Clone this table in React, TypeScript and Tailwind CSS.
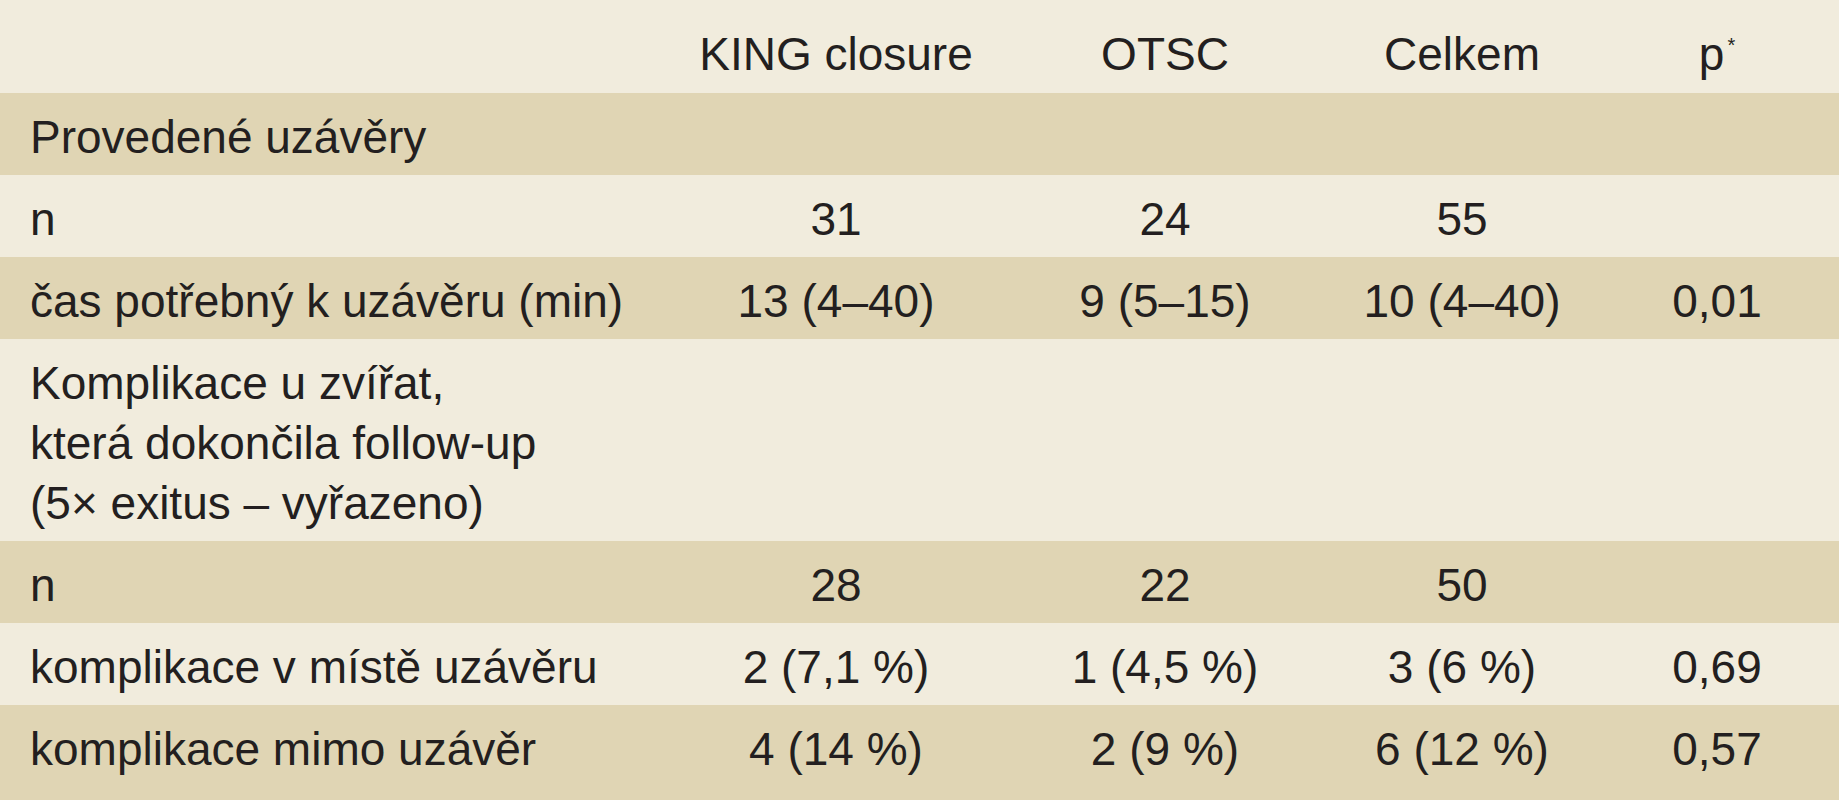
import React from "react";

type Row = {
  label: React.ReactNode;
  cells: string[];
  dark: boolean;
  last?: boolean;
};

const rows: Row[] = [
  { label: "Provedené uzávěry", cells: ["", "", "", ""], dark: true },
  { label: "n", cells: ["31", "24", "55", ""], dark: false },
  {
    label: "čas potřebný k uzávěru (min)",
    cells: ["13 (4–40)", "9 (5–15)", "10 (4–40)", "0,01"],
    dark: true,
  },
  {
    label: (
      <>
        Komplikace u zvířat,
        <br />
        která dokončila follow-up
        <br />
        (5× exitus – vyřazeno)
      </>
    ),
    cells: ["", "", "", ""],
    dark: false,
  },
  { label: "n", cells: ["28", "22", "50", ""], dark: true },
  {
    label: "komplikace v místě uzávěru",
    cells: ["2 (7,1 %)", "1 (4,5 %)", "3 (6 %)", "0,69"],
    dark: false,
  },
  {
    label: "komplikace mimo uzávěr",
    cells: ["4 (14 %)", "2 (9 %)", "6 (12 %)", "0,57"],
    dark: true,
    last: true,
  },
];

export default function App() {
  return (
    <div className="w-[1839px] h-[800px] overflow-hidden bg-[#f1ecdd] text-[#231f20] font-['Liberation_Sans',Arial,sans-serif] text-[46px]">
      <table className="table-fixed w-[1839px] border-collapse">
        <colgroup>
          <col className="w-[671px]" />
          <col className="w-[330px]" />
          <col className="w-[328px]" />
          <col className="w-[266px]" />
          <col className="w-[244px]" />
        </colgroup>
        <thead>
          <tr className="bg-[#f1ecdd]">
            <th className="pt-[24px] pb-[9px] leading-[60px] font-normal text-left pl-[30px]"></th>
            <th className="pt-[24px] pb-[9px] leading-[60px] font-normal text-center whitespace-nowrap">
              KING closure
            </th>
            <th className="pt-[24px] pb-[9px] leading-[60px] font-normal text-center">
              OTSC
            </th>
            <th className="pt-[24px] pb-[9px] leading-[60px] font-normal text-center">
              Celkem
            </th>
            <th className="pt-[24px] pb-[9px] leading-[60px] font-normal text-center whitespace-nowrap">
              p
              <span className="ml-[3px] text-[20px] leading-none align-[18px]">*</span>
            </th>
          </tr>
        </thead>
        <tbody>
          {rows.map((r, i) => {
            const pad = r.last
              ? "pt-[14px] pb-[21px] leading-[60px] align-top"
              : "pt-[14px] pb-[8px] leading-[60px] align-top";
            return (
              <tr key={i} className={r.dark ? "bg-[#e0d5b4]" : "bg-[#f1ecdd]"}>
                <td className={`${pad} text-left pl-[30px] whitespace-nowrap`}>{r.label}</td>
                {r.cells.map((c, j) => (
                  <td key={j} className={`${pad} text-center whitespace-nowrap`}>
                    {c}
                  </td>
                ))}
              </tr>
            );
          })}
        </tbody>
      </table>
    </div>
  );
}
